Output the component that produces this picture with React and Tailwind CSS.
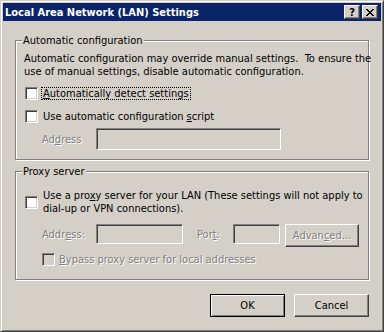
import React from "react";

const Check = ({ disabled = false }) => (
  <div
    className={`w-[13px] h-[13px] shrink-0 border border-t-[#808080] border-l-[#808080] border-r-white border-b-white shadow-[inset_1px_1px_0_#404040,inset_-1px_-1px_0_#d4d0c8] ${
      disabled ? "bg-[#d4d0c8]" : "bg-white"
    }`}
  />
);

const Field = ({ className = "" }) => (
  <div
    className={`bg-[#d4d0c8] border border-t-[#808080] border-l-[#808080] border-r-white border-b-white shadow-[inset_1px_1px_0_#404040,inset_-1px_-1px_0_#d4d0c8] ${className}`}
  />
);

const Group = ({ title, className = "", children }) => (
  <div
    className={`relative border border-[#808080] shadow-[inset_1px_1px_0_#fff,1px_1px_0_#fff] ${className}`}
  >
    <span className="absolute left-[6px] top-[-7px] bg-[#d4d0c8] px-[1px] leading-[13px] whitespace-nowrap">
      {title}
    </span>
    {children}
  </div>
);

const dim = "text-[#808080] [text-shadow:1px_1px_0_#fff]";

const CloseGlyph = () => (
  <svg width="8" height="7" viewBox="0 0 8 7" shapeRendering="crispEdges">
    <path
      d="M0 0h2v1H0zM6 0h2v1H6zM1 1h2v1H1zM5 1h2v1H5zM2 2h4v1H2zM3 3h2v1H3zM2 4h4v1H2zM1 5h2v1H1zM5 5h2v1H5zM0 6h2v1H0zM6 6h2v1H6z"
      fill="#000"
    />
  </svg>
);

export default function App() {
  return (
    <div className="w-[384px] h-[332px] bg-[#d4d0c8] border border-t-[#d4d0c8] border-l-[#d4d0c8] border-r-[#404040] border-b-[#404040] shadow-[inset_1px_1px_0_#fff,inset_-1px_-1px_0_#808080] p-[2px] flex flex-col text-[11px] leading-[13px] text-black font-['DejaVu_Sans_Condensed','Liberation_Sans',sans-serif] overflow-hidden">
      {/* title bar */}
      <div className="h-[18px] bg-[#0a246a] flex items-center pl-[2px] pr-[3px]">
        <span className="text-white font-bold whitespace-nowrap">
          Local Area Network (LAN) Settings
        </span>
        <div className="ml-auto flex gap-[2px]">
          <div className="w-[16px] h-[14px] flex items-center justify-center bg-[#d4d0c8] border border-t-white border-l-white border-r-[#404040] border-b-[#404040] shadow-[inset_-1px_-1px_0_#808080] font-bold text-[11px] leading-none pt-[1px]">
            ?
          </div>
          <div className="w-[16px] h-[14px] flex items-center justify-center bg-[#d4d0c8] border border-t-white border-l-white border-r-[#404040] border-b-[#404040] shadow-[inset_-1px_-1px_0_#808080]">
            <CloseGlyph />
          </div>
        </div>
      </div>

      {/* body */}
      <div className="flex-1 flex flex-col pt-[19px] px-[12px]">
        <Group title="Automatic configuration" className="h-[120px] pl-[8px] pt-[11px]">
          <div className="whitespace-pre">
            <div>Automatic configuration may override manual settings.  To ensure the</div>
            <div>use of manual settings, disable automatic configuration.</div>
          </div>
          <div className="flex items-center h-[13px] mt-[9px] pl-[1px]">
            <Check />
            <span className="ml-[3px] px-[1px] border border-dotted border-black leading-[11px]">
              <u>A</u>utomatically detect settings
            </span>
          </div>
          <div className="flex items-center h-[13px] mt-[10px] pl-[1px]">
            <Check />
            <span className="ml-[4px] px-[1px]">
              Use automatic configuration <u>s</u>cript
            </span>
          </div>
          <div className="flex items-center h-[22px] mt-[5px] pl-[18px]">
            <span className={`w-[54px] ${dim}`}>
              Ad<u>d</u>ress
            </span>
            <Field className="w-[185px] h-[22px]" />
          </div>
        </Group>

        <Group title="Proxy server" className="h-[109px] mt-[11px] pl-[9px] pt-[17px]">
          <div className="flex items-center">
            <Check />
            <div className="ml-[4px] px-[1px] whitespace-nowrap">
              <div>
                Use a pro<u>x</u>y server for your LAN (These settings will not apply to
              </div>
              <div>dial-up or VPN connections).</div>
            </div>
          </div>
          <div className="flex items-start h-[23px] mt-[9px] pl-[17px]">
            <span className={`w-[54px] h-[20px] flex items-center ${dim}`}>
              Addr<u>e</u>ss:
            </span>
            <Field className="w-[87px] h-[20px]" />
            <span className={`ml-[14px] w-[36px] h-[20px] flex items-center ${dim}`}>
              Por<u>t</u>:
            </span>
            <Field className="w-[47px] h-[20px]" />
            <div
              className={`ml-[5px] w-[74px] h-[23px] flex items-center justify-center border border-t-white border-l-white border-r-[#404040] border-b-[#404040] shadow-[inset_-1px_-1px_0_#808080] ${dim}`}
            >
              Advan<u>c</u>ed...
            </div>
          </div>
          <div className="flex items-center h-[13px] mt-[6px] pl-[17px]">
            <Check disabled />
            <span className={`ml-[4px] ${dim}`}>
              <u>B</u>ypass proxy server for local addresses
            </span>
          </div>
        </Group>

        <div className="flex justify-end gap-[9px] mt-[14px]">
          <div className="w-[75px] h-[23px] flex items-center justify-center border border-black shadow-[inset_1px_1px_0_#fff,inset_-1px_-1px_0_#808080]">
            OK
          </div>
          <div className="w-[75px] h-[23px] flex items-center justify-center border border-t-white border-l-white border-r-[#404040] border-b-[#404040] shadow-[inset_-1px_-1px_0_#808080]">
            Cancel
          </div>
        </div>
      </div>
    </div>
  );
}
